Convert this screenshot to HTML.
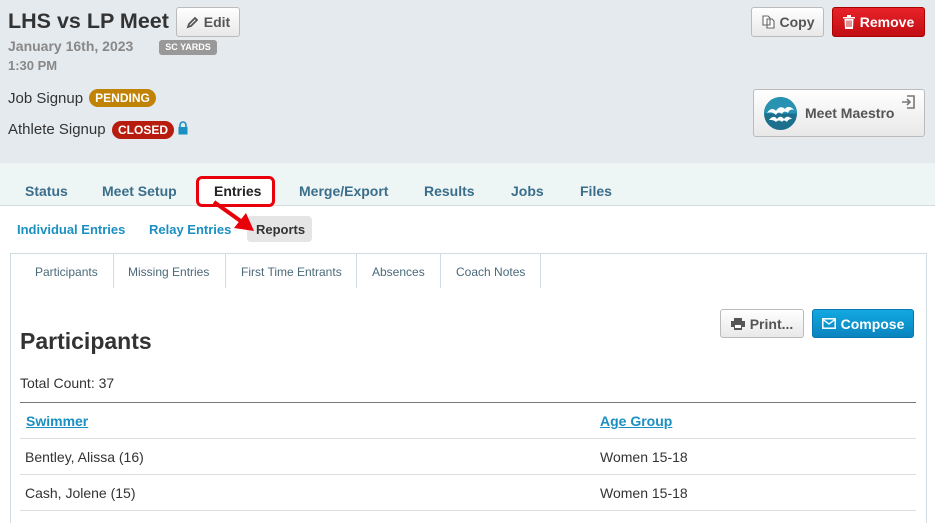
<!DOCTYPE html>
<html><head><meta charset="utf-8"><style>
*{box-sizing:border-box;margin:0;padding:0}
body{width:935px;height:516px;overflow:hidden;font-family:"Liberation Sans",Arial,sans-serif;background:#fff;position:relative;color:#333}
.a{position:absolute;white-space:nowrap}
.hdr{position:absolute;left:0;top:0;width:935px;height:163px;background:#e5eaee}
.tabs{position:absolute;left:0;top:163px;width:935px;height:43px;background:#eef5f5;border-bottom:1px solid #d3dde0}
.btn{position:absolute;border:1px solid #bbb;border-radius:3px;background:linear-gradient(#fff,#e8e8e8);font-weight:bold;color:#555;font-size:14px;display:flex;align-items:center;justify-content:center;gap:5px}
.badge{position:absolute;border-radius:10px;color:#fff;font-weight:bold;font-size:12px;text-align:center;line-height:18px}
.tab{position:absolute;top:183px;font-weight:bold;font-size:14px;color:#3a6e8a}
.sub{position:absolute;top:222px;font-weight:bold;font-size:13px;color:#1a8fc2}
.rt{position:absolute;top:265px;font-size:12px;color:#4a6a7a}
.vl{position:absolute;top:254px;height:34px;width:1px;background:#cfdde2}
.row{position:absolute;left:20px;width:896px;height:1px;background:#ddd}
</style></head><body>
<div class="hdr"></div>
<div class="a" style="left:8px;top:9px;font-size:21.5px;font-weight:bold;color:#333">LHS vs LP Meet</div>
<div class="btn" style="left:176px;top:7px;width:64px;height:30px"><svg width="13" height="13" viewBox="0 0 13 13"><path d="M2 11l1-3 6-6 2 2-6 6z" fill="none" stroke="#555" stroke-width="1.8"/></svg>Edit</div>
<div class="a" style="left:8px;top:38px;font-size:14px;font-weight:bold;color:#888">January 16th, 2023</div>
<div class="badge" style="left:159px;top:40px;width:58px;height:15px;line-height:15px;font-size:9px;border-radius:3px;background:#999">SC YARDS</div>
<div class="a" style="left:8px;top:58px;font-size:13px;font-weight:bold;color:#888">1:30 PM</div>
<div class="a" style="left:8px;top:90px;font-size:15px;color:#333">Job Signup</div>
<div class="badge" style="left:89px;top:89px;width:67px;background:#c08305">PENDING</div>
<div class="a" style="left:8px;top:121px;font-size:15px;color:#333">Athlete Signup</div>
<div class="badge" style="left:112px;top:121px;width:62px;background:#b81c0e">CLOSED</div>
<svg class="a" style="left:178px;top:121px" width="10" height="14" viewBox="0 0 10 14"><path d="M2 6V4a3 3 0 016 0v2" fill="none" stroke="#1a8fc2" stroke-width="1.6"/><rect x="0.5" y="6" width="9" height="7.5" fill="#1a8fc2"/></svg>
<div class="btn" style="left:751px;top:7px;width:73px;height:30px"><svg width="14" height="14" viewBox="0 0 14 14"><path d="M2 1h5l2 2v7H2z M6 4h5l2 2v7H6z" fill="#fff" stroke="#666" stroke-width="1.1"/></svg>Copy</div>
<div class="btn" style="left:832px;top:7px;width:93px;height:30px;background:linear-gradient(#e8232a,#c10d12);border-color:#a00;color:#fff"><svg width="12" height="14" viewBox="0 0 12 14"><path d="M0 2h12v1.5H0zM4 0h4v2H4zM1.5 4h9l-.5 10h-8z" fill="#fff"/><path d="M4 5.5v6.5M6 5.5v6.5M8 5.5v6.5" stroke="#c10d12" stroke-width="0.9"/></svg>Remove</div>
<div class="btn" style="left:753px;top:89px;width:172px;height:48px;justify-content:flex-start;padding-left:10px;gap:8px;color:#555"><svg width="33" height="33" viewBox="0 0 33 33"><circle cx="16.5" cy="16.5" r="16.5" fill="#1d6f8e"/><path d="M0 16.5a16.5 16.5 0 0133 0" fill="#2892b2"/><path d="M3 16c3-5 7-5 9-2 2-4 6-5 9-2 2-3 6-3 9 1-3-1-5 0-6 3-2-2-5-2-6 1-2-2-5-2-6 1-3-3-6-3-9-2z M5 23c3-4 6-4 8-1 2-3 5-3 7 0 2-3 5-3 8 0-3 0-4 1-5 3-2-2-4-2-5 0-2-2-4-2-6 0-2-2-4-2-7-2z" fill="#fff"/></svg>Meet Maestro</div>
<svg class="a" style="left:901px;top:95px" width="14" height="14" viewBox="0 0 14 14"><path d="M6 1h7v12H6M1 7h8M6 4l3 3-3 3" fill="none" stroke="#777" stroke-width="1.6"/></svg>
<div class="tabs"></div>
<div class="tab" style="left:25px">Status</div>
<div class="tab" style="left:102px">Meet Setup</div>
<div class="a" style="left:196px;top:176px;width:79px;height:31px;border:3px solid #e8000a;border-radius:6px;background:#fff"></div>
<div class="tab" style="left:214px;color:#222">Entries</div>
<div class="tab" style="left:299px">Merge/Export</div>
<div class="tab" style="left:424px">Results</div>
<div class="tab" style="left:511px">Jobs</div>
<div class="tab" style="left:580px">Files</div>
<div class="sub" style="left:17px">Individual Entries</div>
<div class="sub" style="left:149px">Relay Entries</div>
<div class="a" style="left:247px;top:216px;width:65px;height:26px;background:#e5e5e5;border-radius:4px"></div>
<div class="a" style="left:256px;top:222px;font-size:13px;font-weight:bold;color:#333">Reports</div>
<svg class="a" style="left:210px;top:200px" width="50" height="35" viewBox="0 0 50 35"><path d="M4 2L32 22" stroke="#e8000a" stroke-width="4"/><path d="M24 28L44 31 36 13z" fill="#e8000a"/></svg>
<div class="a" style="left:10px;top:253px;width:917px;height:270px;border:1px solid #cfdde2;border-bottom:none"></div>
<div class="vl" style="left:113px"></div><div class="vl" style="left:225px"></div><div class="vl" style="left:356px"></div><div class="vl" style="left:440px"></div><div class="vl" style="left:540px"></div>
<div class="rt" style="left:35px">Participants</div>
<div class="rt" style="left:128px">Missing Entries</div>
<div class="rt" style="left:241px">First Time Entrants</div>
<div class="rt" style="left:372px">Absences</div>
<div class="rt" style="left:456px">Coach Notes</div>
<div class="btn" style="left:720px;top:309px;width:84px;height:29px"><svg width="14" height="12" viewBox="0 0 14 12"><path d="M3 0h8v3H3zM0 3h14v6h-3v3H3V9H0z" fill="#555"/><rect x="4" y="7" width="6" height="3" fill="#fff"/></svg>Print...</div>
<div class="btn" style="left:812px;top:309px;width:102px;height:29px;background:linear-gradient(#12a8e0,#0a84bf);border-color:#0877ad;color:#fff"><svg width="14" height="11" viewBox="0 0 14 11"><rect x="0.8" y="0.8" width="12.4" height="9.4" fill="none" stroke="#fff" stroke-width="1.5"/><path d="M1 1.5l6 4.5 6-4.5" fill="none" stroke="#fff" stroke-width="1.4"/></svg>Compose</div>
<div class="a" style="left:20px;top:328px;font-size:23px;font-weight:bold;color:#333">Participants</div>
<div class="a" style="left:20px;top:375px;font-size:14px;color:#333">Total Count: 37</div>
<div class="row" style="top:402px;background:#777"></div>
<div class="a" style="left:26px;top:413px;font-size:14px;font-weight:bold;color:#1a8fc2;text-decoration:underline">Swimmer</div>
<div class="a" style="left:600px;top:413px;font-size:14px;font-weight:bold;color:#1a8fc2;text-decoration:underline">Age Group</div>
<div class="row" style="top:438px"></div>
<div class="a" style="left:25px;top:449px;font-size:14px">Bentley, Alissa (16)</div>
<div class="a" style="left:600px;top:449px;font-size:14px">Women 15-18</div>
<div class="row" style="top:474px"></div>
<div class="a" style="left:25px;top:485px;font-size:14px">Cash, Jolene (15)</div>
<div class="a" style="left:600px;top:485px;font-size:14px">Women 15-18</div>
<div class="row" style="top:510px"></div>
</body></html>
